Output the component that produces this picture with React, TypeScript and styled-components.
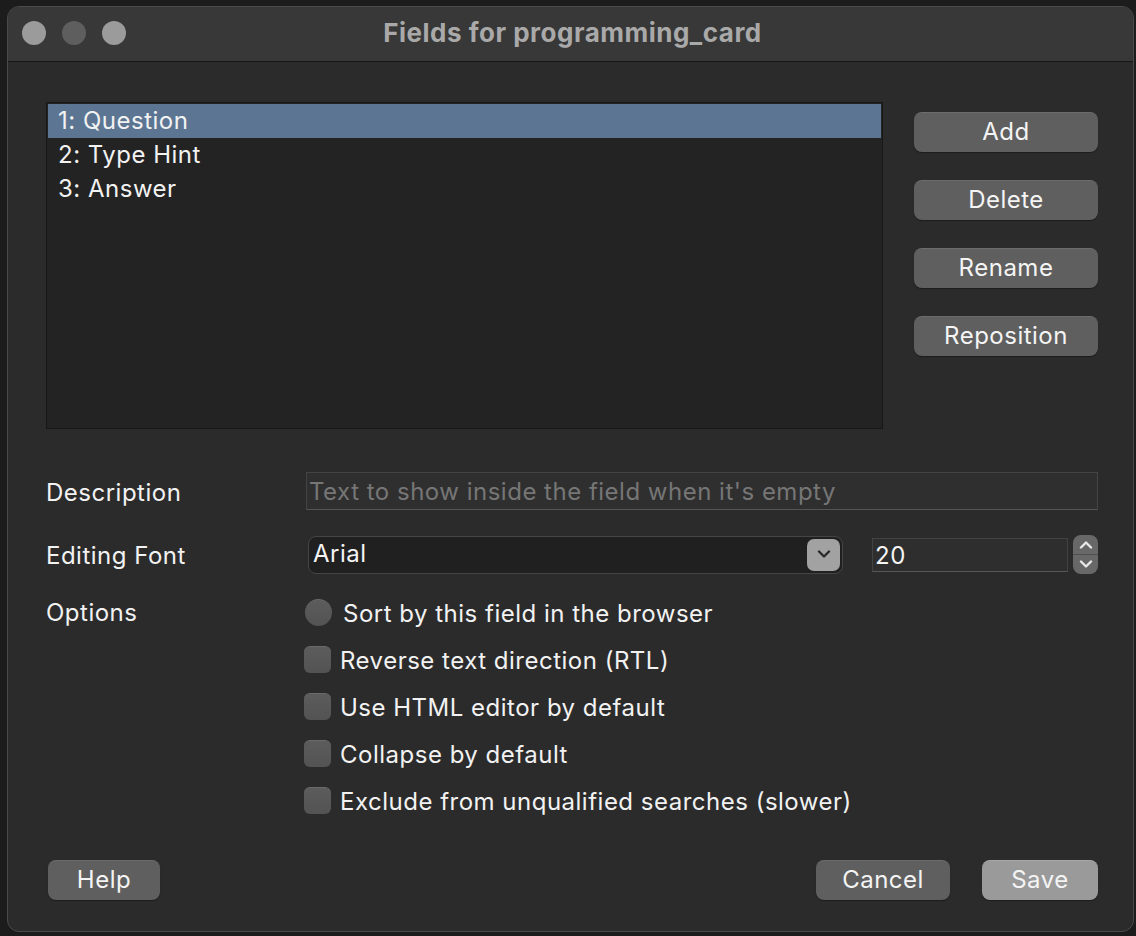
import React from 'react';
import styled, { createGlobalStyle } from 'styled-components';

const GlobalStyle = createGlobalStyle`
  html, body {
    margin: 0;
    padding: 0;
    background: #1c1c1c;
  }
  body {
    font-family: Inter, "Noto Sans", "Liberation Sans", sans-serif;
    -webkit-font-smoothing: antialiased;
    letter-spacing: 0.5px;
  }
`;

const Screen = styled.div`
  width: 1136px;
  height: 936px;
  overflow: hidden;
  padding: 6px 0 0 7px;
  box-sizing: border-box;
`;

const Window = styled.div`
  width: 1127px;
  height: 926px;
  background: #2b2b2b;
  border: 1px solid #4a4a4a;
  border-radius: 12px;
  box-sizing: border-box;
  overflow: hidden;
  display: flex;
  flex-direction: column;
`;

const TitleBar = styled.div`
  height: 55px;
  box-sizing: border-box;
  flex: none;
  background: #383838;
  border-bottom: 1px solid #161616;
  display: flex;
  align-items: center;
  position: relative;
  padding: 0 0 3px 14px;
  gap: 16px;
`;

const Light = styled.span<{ dim?: boolean }>`
  width: 24px;
  height: 24px;
  border-radius: 50%;
  background: ${(p) => (p.dim ? '#5e5e5e' : '#9b9b9b')};
`;

const Title = styled.div`
  position: absolute;
  left: 0;
  right: 0;
  top: 0;
  bottom: 3px;
  display: flex;
  align-items: center;
  justify-content: center;
  font-size: 26px;
  font-weight: 700;
  color: #a9a9a9;
  pointer-events: none;
  padding-left: 4px;
`;

const Body = styled.div`
  flex: 1;
  padding: 40px 35px 0 38px;
  display: flex;
  flex-direction: column;
`;

const TopRow = styled.div`
  display: flex;
  gap: 31px;
`;

const List = styled.div`
  width: 837px;
  height: 327px;
  box-sizing: border-box;
  background: #232323;
  border: 1px solid #171717;
  padding: 1px;
`;

const ListRow = styled.div<{ selected?: boolean }>`
  height: 34px;
  line-height: 33px;
  padding-left: 10px;
  font-size: 24px;
  color: #f2f2f2;
  background: ${(p) => (p.selected ? '#5b7593' : 'transparent')};
`;

const SideButtons = styled.div`
  display: flex;
  flex-direction: column;
  gap: 28px;
  padding-top: 10px;
`;

const Button = styled.button<{ w?: number; light?: boolean }>`
  width: ${(p) => p.w ?? 184}px;
  height: 40px;
  border: none;
  border-top: 1px solid ${(p) => (p.light ? '#a8a8a8' : '#6c6c6c')};
  border-radius: 8px;
  background: ${(p) => (p.light ? '#9a9a9a' : '#5f5f5f')};
  color: #f4f4f4;
  font-family: inherit;
  letter-spacing: 0.5px;
  font-size: 24px;
  line-height: 36px;
  padding: 0 0 2px;
  box-shadow: 0 1px 1px rgba(0, 0, 0, 0.35);
`;

const Form = styled.div`
  margin-top: 43px;
  display: grid;
  grid-template-columns: 260px 1fr;
  row-gap: 25px;
  align-items: center;
`;

const Label = styled.div<{ top?: boolean }>`
  font-size: 24px;
  color: #f2f2f2;
  padding-top: 2px;
  align-self: ${(p) => (p.top ? 'start' : 'center')};
  margin-top: ${(p) => (p.top ? '-3px' : '0')};
`;

const TextInput = styled.div`
  height: 38px;
  box-sizing: border-box;
  background: #2f2f2f;
  border: 1px solid #444;
  border-bottom-color: #555;
  font-size: 24px;
  color: #767676;
  line-height: 38px;
  padding-left: 2px;
`;

const FontRow = styled.div`
  display: flex;
  align-items: center;
  padding-left: 2px;
`;

const Combo = styled.div`
  width: 535px;
  height: 38px;
  box-sizing: border-box;
  border: 1px solid #454545;
  border-radius: 8px;
  background: #202020;
  display: flex;
  align-items: center;
  padding: 2px 2px 2px 4px;
  font-size: 24px;
  color: #f4f4f4;
`;

const ComboText = styled.span`
  flex: 1;
  margin-top: -3px;
`;

const ComboArrow = styled.span`
  width: 33px;
  height: 32px;
  border-radius: 7px;
  background: #a2a2a2;
  display: flex;
  align-items: center;
  justify-content: center;
`;

const SpinField = styled.div`
  margin-left: 29px;
  width: 196px;
  height: 34px;
  box-sizing: border-box;
  background: #2e2e2e;
  border: 1px solid #434343;
  border-bottom-color: #575757;
  font-size: 24px;
  color: #f4f4f4;
  line-height: 34px;
  padding-left: 2px;
`;

const Spinner = styled.div`
  margin-left: 5px;
  width: 25px;
  height: 39px;
  border-radius: 8px;
  background: #686868;
  display: flex;
  flex-direction: column;
  overflow: hidden;
`;

const SpinHalf = styled.span<{ first?: boolean }>`
  flex: 1;
  display: flex;
  align-items: center;
  justify-content: center;
  border-bottom: ${(p) => (p.first ? '1px solid #505050' : 'none')};
`;

const Options = styled.div`
  display: flex;
  flex-direction: column;
  gap: 19px;
  margin-top: -1px;
`;

const Option = styled.div`
  display: flex;
  align-items: center;
  gap: 9px;
  font-size: 24px;
  color: #f2f2f2;
  height: 28px;
`;

const OptionText = styled.span`
  padding-top: 2px;
`;

const Box = styled.span<{ round?: boolean }>`
  width: 27px;
  height: 27px;
  flex: none;
  box-sizing: border-box;
  border-radius: ${(p) => (p.round ? '50%' : '6px')};
  background: linear-gradient(#5c5c5c, #535353);
  border-top: 1px solid #6a6a6a;
  margin-left: ${(p) => (p.round ? '-1px' : '-2px')};
  margin-right: ${(p) => (p.round ? '2px' : '0')};
`;

const Footer = styled.div`
  margin-top: auto;
  margin-bottom: 31px;
  display: flex;
  align-items: center;
  padding-left: 2px;
`;

const Spacer = styled.div`
  flex: 1;
`;

const FooterGap = styled.div`
  width: 32px;
`;

const Chevron = ({ up, color }: { up?: boolean; color: string }) => (
  <svg width="14" height="9" viewBox="0 0 14 9">
    <path
      d={up ? 'M2 7.5 L7 2.5 L12 7.5' : 'M2 1.5 L7 6.5 L12 1.5'}
      fill="none"
      stroke={color}
      strokeWidth="2.4"
      strokeLinecap="round"
      strokeLinejoin="round"
    />
  </svg>
);

const fields = ['1: Question', '2: Type Hint', '3: Answer'];
const options = [
  'Reverse text direction (RTL)',
  'Use HTML editor by default',
  'Collapse by default',
  'Exclude from unqualified searches (slower)',
];

export default function App() {
  return (
    <>
      <GlobalStyle />
      <Screen>
        <Window>
          <TitleBar>
            <Light />
            <Light dim />
            <Light />
            <Title>Fields for programming_card</Title>
          </TitleBar>
          <Body>
            <TopRow>
              <List>
                {fields.map((f, i) => (
                  <ListRow key={f} selected={i === 0}>
                    {f}
                  </ListRow>
                ))}
              </List>
              <SideButtons>
                <Button>Add</Button>
                <Button>Delete</Button>
                <Button>Rename</Button>
                <Button>Reposition</Button>
              </SideButtons>
            </TopRow>
            <Form>
              <Label>Description</Label>
              <TextInput>Text to show inside the field when it's empty</TextInput>
              <Label>Editing Font</Label>
              <FontRow>
                <Combo>
                  <ComboText>Arial</ComboText>
                  <ComboArrow>
                    <Chevron color="#2a2a2a" />
                  </ComboArrow>
                </Combo>
                <SpinField>20</SpinField>
                <Spinner>
                  <SpinHalf first>
                    <Chevron up color="#e8e8e8" />
                  </SpinHalf>
                  <SpinHalf>
                    <Chevron color="#e8e8e8" />
                  </SpinHalf>
                </Spinner>
              </FontRow>
              <Label top>Options</Label>
              <Options>
                <Option>
                  <Box round />
                  <OptionText>Sort by this field in the browser</OptionText>
                </Option>
                {options.map((o) => (
                  <Option key={o}>
                    <Box />
                    <OptionText>{o}</OptionText>
                  </Option>
                ))}
              </Options>
            </Form>
            <Footer>
              <Button w={112}>Help</Button>
              <Spacer />
              <Button w={134}>Cancel</Button>
              <FooterGap />
              <Button w={116} light>
                Save
              </Button>
            </Footer>
          </Body>
        </Window>
      </Screen>
    </>
  );
}
